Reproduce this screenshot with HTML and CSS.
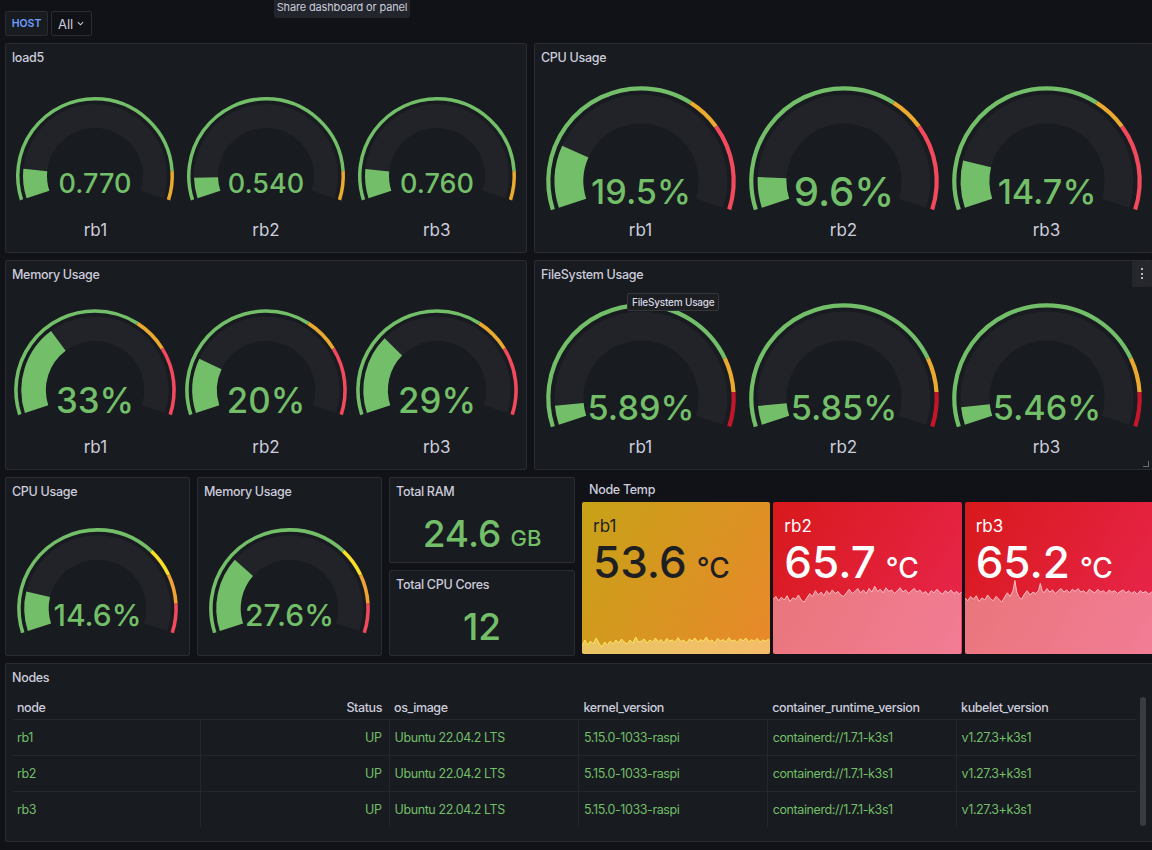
FILE: index.html
```html
<!DOCTYPE html>
<html lang="en">
<head>
<meta charset="utf-8">
<title>Dashboard</title>
<link rel="stylesheet" href="styles.css">
</head>
<body>
<div class="tip-top">Share dashboard or panel</div>
<header class="topbar">
  <div class="var-label">HOST</div>
  <div class="var-select">All <svg class="chev" viewBox="0 0 8 5"><path d="M1 1l3 3 3-3"/></svg></div>
</header>
<main class="dash">
  <div class="row row-a">
    <section class="panel w-left">
      <div class="panel-title">load5</div>
      <div class="gauges pad-sm">
        <div class="gauge">
          <svg class="g-sm" viewBox="-85 -85 170 115">
            <path class="track" d="M -57.064 18.541 A 60 60 0 1 1 57.064 18.541"/>
            <path class="vfill" pathLength="100" stroke-dasharray="11 200" d="M -57.064 18.541 A 60 60 0 1 1 57.064 18.541"/>
            <path class="th th-g" pathLength="100" stroke-dasharray="90 200" d="M -73.469 23.872 A 77.25 77.25 0 1 1 73.469 23.872"/>
            <path class="th th-o" pathLength="100" stroke-dasharray="0 90 10 200" d="M -73.469 23.872 A 77.25 77.25 0 1 1 73.469 23.872"/>
            <text class="gval f27" y="17">0.770</text>
          </svg>
          <div class="glabel lm-sm">rb1</div>
        </div>
        <div class="gauge">
          <svg class="g-sm" viewBox="-85 -85 170 115">
            <path class="track" d="M -57.064 18.541 A 60 60 0 1 1 57.064 18.541"/>
            <path class="vfill" pathLength="100" stroke-dasharray="7.7 200" d="M -57.064 18.541 A 60 60 0 1 1 57.064 18.541"/>
            <path class="th th-g" pathLength="100" stroke-dasharray="90 200" d="M -73.469 23.872 A 77.25 77.25 0 1 1 73.469 23.872"/>
            <path class="th th-o" pathLength="100" stroke-dasharray="0 90 10 200" d="M -73.469 23.872 A 77.25 77.25 0 1 1 73.469 23.872"/>
            <text class="gval f27" y="17">0.540</text>
          </svg>
          <div class="glabel lm-sm">rb2</div>
        </div>
        <div class="gauge">
          <svg class="g-sm" viewBox="-85 -85 170 115">
            <path class="track" d="M -57.064 18.541 A 60 60 0 1 1 57.064 18.541"/>
            <path class="vfill" pathLength="100" stroke-dasharray="10.9 200" d="M -57.064 18.541 A 60 60 0 1 1 57.064 18.541"/>
            <path class="th th-g" pathLength="100" stroke-dasharray="90 200" d="M -73.469 23.872 A 77.25 77.25 0 1 1 73.469 23.872"/>
            <path class="th th-o" pathLength="100" stroke-dasharray="0 90 10 200" d="M -73.469 23.872 A 77.25 77.25 0 1 1 73.469 23.872"/>
            <text class="gval f27" y="17">0.760</text>
          </svg>
          <div class="glabel lm-sm">rb3</div>
        </div>
      </div>
    </section>
    <section class="panel w-right">
      <div class="panel-title">CPU Usage</div>
      <div class="gauges pad-lg">
        <div class="gauge">
          <svg class="g-lg" viewBox="-85 -85 170 115">
            <path class="track" d="M -57.064 18.541 A 60 60 0 1 1 57.064 18.541"/>
            <path class="vfill" pathLength="100" stroke-dasharray="19.5 200" d="M -57.064 18.541 A 60 60 0 1 1 57.064 18.541"/>
            <path class="th th-g" pathLength="100" stroke-dasharray="65 200" d="M -73.469 23.872 A 77.25 77.25 0 1 1 73.469 23.872"/>
            <path class="th th-o" pathLength="100" stroke-dasharray="0 65 10 200" d="M -73.469 23.872 A 77.25 77.25 0 1 1 73.469 23.872"/>
            <path class="th th-r" pathLength="100" stroke-dasharray="0 75 25 200" d="M -73.469 23.872 A 77.25 77.25 0 1 1 73.469 23.872"/>
            <text class="gval f28" y="19">19.5%</text>
          </svg>
          <div class="glabel lm-lg">rb1</div>
        </div>
        <div class="gauge">
          <svg class="g-lg" viewBox="-85 -85 170 115">
            <path class="track" d="M -57.064 18.541 A 60 60 0 1 1 57.064 18.541"/>
            <path class="vfill" pathLength="100" stroke-dasharray="9.6 200" d="M -57.064 18.541 A 60 60 0 1 1 57.064 18.541"/>
            <path class="th th-g" pathLength="100" stroke-dasharray="65 200" d="M -73.469 23.872 A 77.25 77.25 0 1 1 73.469 23.872"/>
            <path class="th th-o" pathLength="100" stroke-dasharray="0 65 10 200" d="M -73.469 23.872 A 77.25 77.25 0 1 1 73.469 23.872"/>
            <path class="th th-r" pathLength="100" stroke-dasharray="0 75 25 200" d="M -73.469 23.872 A 77.25 77.25 0 1 1 73.469 23.872"/>
            <text class="gval f33" y="21">9.6%</text>
          </svg>
          <div class="glabel lm-lg">rb2</div>
        </div>
        <div class="gauge">
          <svg class="g-lg" viewBox="-85 -85 170 115">
            <path class="track" d="M -57.064 18.541 A 60 60 0 1 1 57.064 18.541"/>
            <path class="vfill" pathLength="100" stroke-dasharray="14.7 200" d="M -57.064 18.541 A 60 60 0 1 1 57.064 18.541"/>
            <path class="th th-g" pathLength="100" stroke-dasharray="65 200" d="M -73.469 23.872 A 77.25 77.25 0 1 1 73.469 23.872"/>
            <path class="th th-o" pathLength="100" stroke-dasharray="0 65 10 200" d="M -73.469 23.872 A 77.25 77.25 0 1 1 73.469 23.872"/>
            <path class="th th-r" pathLength="100" stroke-dasharray="0 75 25 200" d="M -73.469 23.872 A 77.25 77.25 0 1 1 73.469 23.872"/>
            <text class="gval f28" y="19">14.7%</text>
          </svg>
          <div class="glabel lm-lg">rb3</div>
        </div>
      </div>
    </section>
  </div>

  <div class="row row-a">
    <section class="panel w-left">
      <div class="panel-title">Memory Usage</div>
      <div class="gauges pad-mem">
        <div class="gauge">
          <svg class="g-mem" viewBox="-85 -85 170 115">
            <path class="track" d="M -57.064 18.541 A 60 60 0 1 1 57.064 18.541"/>
            <path class="vfill" pathLength="100" stroke-dasharray="33 200" d="M -57.064 18.541 A 60 60 0 1 1 57.064 18.541"/>
            <path class="th th-g" pathLength="100" stroke-dasharray="65 200" d="M -73.469 23.872 A 77.25 77.25 0 1 1 73.469 23.872"/>
            <path class="th th-o" pathLength="100" stroke-dasharray="0 65 12 200" d="M -73.469 23.872 A 77.25 77.25 0 1 1 73.469 23.872"/>
            <path class="th th-r" pathLength="100" stroke-dasharray="0 77 23 200" d="M -73.469 23.872 A 77.25 77.25 0 1 1 73.469 23.872"/>
            <text class="gval f34" y="22">33%</text>
          </svg>
          <div class="glabel lm-mem">rb1</div>
        </div>
        <div class="gauge">
          <svg class="g-mem" viewBox="-85 -85 170 115">
            <path class="track" d="M -57.064 18.541 A 60 60 0 1 1 57.064 18.541"/>
            <path class="vfill" pathLength="100" stroke-dasharray="20 200" d="M -57.064 18.541 A 60 60 0 1 1 57.064 18.541"/>
            <path class="th th-g" pathLength="100" stroke-dasharray="65 200" d="M -73.469 23.872 A 77.25 77.25 0 1 1 73.469 23.872"/>
            <path class="th th-o" pathLength="100" stroke-dasharray="0 65 12 200" d="M -73.469 23.872 A 77.25 77.25 0 1 1 73.469 23.872"/>
            <path class="th th-r" pathLength="100" stroke-dasharray="0 77 23 200" d="M -73.469 23.872 A 77.25 77.25 0 1 1 73.469 23.872"/>
            <text class="gval f34" y="22">20%</text>
          </svg>
          <div class="glabel lm-mem">rb2</div>
        </div>
        <div class="gauge">
          <svg class="g-mem" viewBox="-85 -85 170 115">
            <path class="track" d="M -57.064 18.541 A 60 60 0 1 1 57.064 18.541"/>
            <path class="vfill" pathLength="100" stroke-dasharray="29 200" d="M -57.064 18.541 A 60 60 0 1 1 57.064 18.541"/>
            <path class="th th-g" pathLength="100" stroke-dasharray="65 200" d="M -73.469 23.872 A 77.25 77.25 0 1 1 73.469 23.872"/>
            <path class="th th-o" pathLength="100" stroke-dasharray="0 65 12 200" d="M -73.469 23.872 A 77.25 77.25 0 1 1 73.469 23.872"/>
            <path class="th th-r" pathLength="100" stroke-dasharray="0 77 23 200" d="M -73.469 23.872 A 77.25 77.25 0 1 1 73.469 23.872"/>
            <text class="gval f34" y="22">29%</text>
          </svg>
          <div class="glabel lm-mem">rb3</div>
        </div>
      </div>
    </section>
    <section class="panel w-right">
      <div class="panel-title">FileSystem Usage</div>
      <div class="gauges pad-lg">
        <div class="gauge">
          <svg class="g-lg" viewBox="-85 -85 170 115">
            <path class="track" d="M -57.064 18.541 A 60 60 0 1 1 57.064 18.541"/>
            <path class="vfill" pathLength="100" stroke-dasharray="6 200" d="M -57.064 18.541 A 60 60 0 1 1 57.064 18.541"/>
            <path class="th th-g" pathLength="100" stroke-dasharray="80 200" d="M -73.469 23.872 A 77.25 77.25 0 1 1 73.469 23.872"/>
            <path class="th th-o" pathLength="100" stroke-dasharray="0 80 10 200" d="M -73.469 23.872 A 77.25 77.25 0 1 1 73.469 23.872"/>
            <path class="th th-dr" pathLength="100" stroke-dasharray="0 90 10 200" d="M -73.469 23.872 A 77.25 77.25 0 1 1 73.469 23.872"/>
            <text class="gval f28" y="18.5">5.89%</text>
          </svg>
          <div class="glabel lm-lg">rb1</div>
        </div>
        <div class="gauge">
          <svg class="g-lg" viewBox="-85 -85 170 115">
            <path class="track" d="M -57.064 18.541 A 60 60 0 1 1 57.064 18.541"/>
            <path class="vfill" pathLength="100" stroke-dasharray="5.9 200" d="M -57.064 18.541 A 60 60 0 1 1 57.064 18.541"/>
            <path class="th th-g" pathLength="100" stroke-dasharray="80 200" d="M -73.469 23.872 A 77.25 77.25 0 1 1 73.469 23.872"/>
            <path class="th th-o" pathLength="100" stroke-dasharray="0 80 10 200" d="M -73.469 23.872 A 77.25 77.25 0 1 1 73.469 23.872"/>
            <path class="th th-dr" pathLength="100" stroke-dasharray="0 90 10 200" d="M -73.469 23.872 A 77.25 77.25 0 1 1 73.469 23.872"/>
            <text class="gval f28" y="18.5">5.85%</text>
          </svg>
          <div class="glabel lm-lg">rb2</div>
        </div>
        <div class="gauge">
          <svg class="g-lg" viewBox="-85 -85 170 115">
            <path class="track" d="M -57.064 18.541 A 60 60 0 1 1 57.064 18.541"/>
            <path class="vfill" pathLength="100" stroke-dasharray="5.5 200" d="M -57.064 18.541 A 60 60 0 1 1 57.064 18.541"/>
            <path class="th th-g" pathLength="100" stroke-dasharray="80 200" d="M -73.469 23.872 A 77.25 77.25 0 1 1 73.469 23.872"/>
            <path class="th th-o" pathLength="100" stroke-dasharray="0 80 10 200" d="M -73.469 23.872 A 77.25 77.25 0 1 1 73.469 23.872"/>
            <path class="th th-dr" pathLength="100" stroke-dasharray="0 90 10 200" d="M -73.469 23.872 A 77.25 77.25 0 1 1 73.469 23.872"/>
            <text class="gval f28" y="18.5">5.46%</text>
          </svg>
          <div class="glabel lm-lg">rb3</div>
        </div>
      </div>
      <div class="panel-menu"><svg viewBox="0 0 4 14"><rect x="1" y="1" width="2" height="2"/><rect x="1" y="6" width="2" height="2"/><rect x="1" y="10" width="2" height="2"/></svg></div>
      <div class="panel-tip">FileSystem Usage</div>
      <div class="resize"></div>
    </section>
  </div>

  <div class="row row-b">
    <section class="panel w-g1">
      <div class="panel-title">CPU Usage</div>
      <div class="gauges pad-md">
        <div class="gauge">
          <svg class="g-md" viewBox="-85 -85 170 115">
            <path class="track" d="M -57.064 18.541 A 60 60 0 1 1 57.064 18.541"/>
            <path class="vfill" pathLength="100" stroke-dasharray="14.6 200" d="M -57.064 18.541 A 60 60 0 1 1 57.064 18.541"/>
            <path class="th th-g" pathLength="100" stroke-dasharray="70 200" d="M -73.469 23.872 A 77.25 77.25 0 1 1 73.469 23.872"/>
            <path class="th th-y" pathLength="100" stroke-dasharray="0 70 10 200" d="M -73.469 23.872 A 77.25 77.25 0 1 1 73.469 23.872"/>
            <path class="th th-o2" pathLength="100" stroke-dasharray="0 80 10 200" d="M -73.469 23.872 A 77.25 77.25 0 1 1 73.469 23.872"/>
            <path class="th th-r" pathLength="100" stroke-dasharray="0 90 10 200" d="M -73.469 23.872 A 77.25 77.25 0 1 1 73.469 23.872"/>
            <text class="gval f29" y="17.7">14.6%</text>
          </svg>
        </div>
      </div>
    </section>
    <section class="panel w-g2">
      <div class="panel-title">Memory Usage</div>
      <div class="gauges pad-md">
        <div class="gauge">
          <svg class="g-md" viewBox="-85 -85 170 115">
            <path class="track" d="M -57.064 18.541 A 60 60 0 1 1 57.064 18.541"/>
            <path class="vfill" pathLength="100" stroke-dasharray="27.6 200" d="M -57.064 18.541 A 60 60 0 1 1 57.064 18.541"/>
            <path class="th th-g" pathLength="100" stroke-dasharray="70 200" d="M -73.469 23.872 A 77.25 77.25 0 1 1 73.469 23.872"/>
            <path class="th th-y" pathLength="100" stroke-dasharray="0 70 10 200" d="M -73.469 23.872 A 77.25 77.25 0 1 1 73.469 23.872"/>
            <path class="th th-o2" pathLength="100" stroke-dasharray="0 80 10 200" d="M -73.469 23.872 A 77.25 77.25 0 1 1 73.469 23.872"/>
            <path class="th th-r" pathLength="100" stroke-dasharray="0 90 10 200" d="M -73.469 23.872 A 77.25 77.25 0 1 1 73.469 23.872"/>
            <text class="gval f29" y="17.7">27.6%</text>
          </svg>
        </div>
      </div>
    </section>
    <div class="stat-col">
      <section class="panel stat">
        <div class="panel-title">Total RAM</div>
        <div class="stat-body"><span class="stat-num">24.6</span><span class="stat-unit">GB</span></div>
      </section>
      <section class="panel stat">
        <div class="panel-title">Total CPU Cores</div>
        <div class="stat-body"><span class="stat-num">12</span></div>
      </section>
    </div>
    <section class="temp-panel">
      <div class="panel-title temp-title">Node Temp</div>
      <div class="tiles">
        <div class="tile tile-warn">
          <div class="tile-name">rb1</div>
          <div class="tile-val"><span class="tile-num">53.6</span><span class="tile-unit">°C</span></div>
          <svg class="spark spark-low" viewBox="0 0 100 100" preserveAspectRatio="none">
            <polygon class="spark-fill" points="0,60 1.5,30 3,55 4.5,35 6,50 7.5,20 9,45 10.5,65 12,40 13.5,55 15,35 16.5,50 18,30 19.5,45 21,25 22.5,40 24,50 25.5,30 27,45 28.5,15 30,40 31.5,35 33,25 34.5,45 36,30 37.5,40 39,20 40.5,38 42,28 43.5,45 45,22 46.5,35 48,30 49.5,42 51,18 52.5,38 54,30 55.5,45 57,25 58.5,35 60,20 61.5,40 63,28 64.5,36 66,15 67.5,38 69,30 70.5,44 72,22 73.5,35 75,28 76.5,40 78,18 79.5,36 81,30 82.5,42 84,24 85.5,34 87,20 88.5,40 90,28 91.5,36 93,22 94.5,40 96,30 97.5,36 99,25 100,35 100,100 0,100"/>
            <polyline class="spark-line" points="0,60 1.5,30 3,55 4.5,35 6,50 7.5,20 9,45 10.5,65 12,40 13.5,55 15,35 16.5,50 18,30 19.5,45 21,25 22.5,40 24,50 25.5,30 27,45 28.5,15 30,40 31.5,35 33,25 34.5,45 36,30 37.5,40 39,20 40.5,38 42,28 43.5,45 45,22 46.5,35 48,30 49.5,42 51,18 52.5,38 54,30 55.5,45 57,25 58.5,35 60,20 61.5,40 63,28 64.5,36 66,15 67.5,38 69,30 70.5,44 72,22 73.5,35 75,28 76.5,40 78,18 79.5,36 81,30 82.5,42 84,24 85.5,34 87,20 88.5,40 90,28 91.5,36 93,22 94.5,40 96,30 97.5,36 99,25 100,35"/>
          </svg>
        </div>
        <div class="tile tile-crit">
          <div class="tile-name">rb2</div>
          <div class="tile-val"><span class="tile-num">65.7</span><span class="tile-unit">°C</span></div>
          <svg class="spark spark-high" viewBox="0 0 100 100" preserveAspectRatio="none">
            <polygon class="spark-fill" points="0,24 1.5,20 3,26 4.5,21 6,25 7.5,19 9,27 10.5,22 12,24 13.5,18 15,25 16.5,28 18,22 19.5,16 21,20 22.5,12 24,18 25.5,14 27,19 28.5,12 30,17 31.5,11 33,16 34.5,13 36,18 37.5,20 39,15 40.5,10 42,16 43.5,13 45,9 46.5,15 48,11 49.5,16 51,9 52.5,14 54,6 55.5,13 57,10 58.5,15 60,8 61.5,13 63,11 64.5,16 66,12 67.5,8 69,14 70.5,11 72,16 73.5,12 75,9 76.5,14 78,11 79.5,16 81,13 82.5,18 84,12 85.5,15 87,10 88.5,14 90,17 91.5,12 93,15 94.5,11 96,16 97.5,13 99,17 100,14 100,100 0,100"/>
            <polyline class="spark-line" points="0,24 1.5,20 3,26 4.5,21 6,25 7.5,19 9,27 10.5,22 12,24 13.5,18 15,25 16.5,28 18,22 19.5,16 21,20 22.5,12 24,18 25.5,14 27,19 28.5,12 30,17 31.5,11 33,16 34.5,13 36,18 37.5,20 39,15 40.5,10 42,16 43.5,13 45,9 46.5,15 48,11 49.5,16 51,9 52.5,14 54,6 55.5,13 57,10 58.5,15 60,8 61.5,13 63,11 64.5,16 66,12 67.5,8 69,14 70.5,11 72,16 73.5,12 75,9 76.5,14 78,11 79.5,16 81,13 82.5,18 84,12 85.5,15 87,10 88.5,14 90,17 91.5,12 93,15 94.5,11 96,16 97.5,13 99,17 100,14"/>
          </svg>
        </div>
        <div class="tile tile-crit">
          <div class="tile-name">rb3</div>
          <div class="tile-val"><span class="tile-num">65.2</span><span class="tile-unit">°C</span></div>
          <svg class="spark spark-high" viewBox="0 0 100 100" preserveAspectRatio="none">
            <polygon class="spark-fill" points="0,22 1.5,26 3,20 4.5,24 6,19 7.5,27 9,22 10.5,25 12,18 13.5,23 15,26 16.5,20 18,24 19.5,28 21,21 22.5,15 24,20 25.5,12 26.5,-2 27.5,14 28.5,20 30,24 31.5,17 33,12 34.5,18 36,14 37.5,16 39,12 40,2 41,12 42,15 43.5,9 45,14 46.5,11 48,16 49.5,12 51,9 52.5,14 54,11 55.5,15 57,10 58.5,13 60,9 61.5,14 63,12 64.5,16 66,10 67.5,13 69,15 70.5,10 72,14 73.5,12 75,16 76.5,11 78,14 79.5,12 81,16 82.5,13 84,11 85.5,15 87,12 88.5,16 90,13 91.5,17 93,12 94.5,15 96,13 97.5,17 99,14 100,16 100,100 0,100"/>
            <polyline class="spark-line" points="0,22 1.5,26 3,20 4.5,24 6,19 7.5,27 9,22 10.5,25 12,18 13.5,23 15,26 16.5,20 18,24 19.5,28 21,21 22.5,15 24,20 25.5,12 26.5,-2 27.5,14 28.5,20 30,24 31.5,17 33,12 34.5,18 36,14 37.5,16 39,12 40,2 41,12 42,15 43.5,9 45,14 46.5,11 48,16 49.5,12 51,9 52.5,14 54,11 55.5,15 57,10 58.5,13 60,9 61.5,14 63,12 64.5,16 66,10 67.5,13 69,15 70.5,10 72,14 73.5,12 75,16 76.5,11 78,14 79.5,12 81,16 82.5,13 84,11 85.5,15 87,12 88.5,16 90,13 91.5,17 93,12 94.5,15 96,13 97.5,17 99,14 100,16"/>
          </svg>
        </div>
      </div>
    </section>
  </div>

  <div class="row row-b">
    <section class="panel w-full">
      <div class="panel-title">Nodes</div>
      <div class="table-wrap">
        <table class="nodes">
          <colgroup>
            <col class="c1"><col class="c2"><col class="c3"><col class="c4"><col class="c5"><col class="c6">
          </colgroup>
          <thead>
            <tr><th>node</th><th class="right">Status</th><th>os_image</th><th>kernel_version</th><th>container_runtime_version</th><th>kubelet_version</th></tr>
          </thead>
          <tbody>
            <tr><td>rb1</td><td class="right">UP</td><td>Ubuntu 22.04.2 LTS</td><td>5.15.0-1033-raspi</td><td>containerd://1.7.1-k3s1</td><td>v1.27.3+k3s1</td></tr>
            <tr><td>rb2</td><td class="right">UP</td><td>Ubuntu 22.04.2 LTS</td><td>5.15.0-1033-raspi</td><td>containerd://1.7.1-k3s1</td><td>v1.27.3+k3s1</td></tr>
            <tr><td>rb3</td><td class="right">UP</td><td>Ubuntu 22.04.2 LTS</td><td>5.15.0-1033-raspi</td><td>containerd://1.7.1-k3s1</td><td>v1.27.3+k3s1</td></tr>
          </tbody>
        </table>
        <div class="scrollbar"></div>
      </div>
    </section>
  </div>
</main>
</body>
</html>
```

FILE: styles.css
```css
* { box-sizing: border-box; }
html, body { margin: 0; padding: 0; }
body {
  background: #111217;
  font-family: Inter, "Noto Sans", sans-serif;
  color: #ccccdc;
  width: 1152px;
  height: 850px;
  overflow: hidden;
  position: relative;
}

.tip-top {
  position: absolute;
  left: 274px;
  top: -4px;
  width: 136px;
  height: 22px;
  padding-top: 4px;
  background: #22252b;
  border-radius: 3px;
  font-size: 11px;
  letter-spacing: -0.15px;
  line-height: 14px;
  text-align: center;
  white-space: nowrap;
  color: #ccccdc;
  z-index: 5;
}

.topbar {
  height: 43px;
  display: flex;
  align-items: flex-start;
  gap: 3px;
  padding: 11px 0 0 5px;
}
.var-label {
  height: 25px;
  width: 43px;
  display: flex;
  align-items: center;
  justify-content: center;
  border: 1px solid #2a2c31;
  background: #181b1f;
  color: #6e9fff;
  font-size: 10.5px;
  font-weight: 600;
  border-radius: 2px;
}
.var-select {
  height: 25px;
  width: 41px;
  padding: 0 0 0 6px;
  display: flex;
  align-items: center;
  gap: 4px;
  border: 1px solid #2a2c31;
  background: #111217;
  font-size: 13px;
  color: #ccccdc;
  border-radius: 2px;
}
.chev { width: 7px; height: 5px; }
.chev path { fill: none; stroke: #ccccdc; stroke-width: 1.2; }

.dash {
  display: flex;
  flex-direction: column;
  gap: 7px;
  padding-left: 5px;
  width: 1153px;
}
.row { display: flex; gap: 7px; }
.row-a { height: 210px; }
.row-b { height: 179px; }

.panel {
  background: #181b1f;
  border: 1px solid #2a2c31;
  border-radius: 2px;
  position: relative;
  overflow: hidden;
}
.w-left { width: 522px; }
.w-right { flex: 1; }
.w-g1 { width: 185px; }
.w-g2 { width: 185px; }
.w-full { flex: 1; }

.panel-title {
  height: 27px;
  line-height: 27px;
  padding-left: 6px;
  font-size: 12.5px;
  letter-spacing: -0.3px;
  font-weight: 500;
  color: #ccccdc;
  white-space: nowrap;
}

/* gauges */
.gauges { display: flex; padding: 0 4px; }
.pad-sm { padding-top: 20px; }
.pad-mem { padding-top: 15px; }
.pad-lg { padding-top: 8px; }
.pad-md { padding-top: 17px; }
.gauge {
  flex: 1;
  display: flex;
  flex-direction: column;
  align-items: center;
  min-width: 0;
}
.gauge svg { flex-shrink: 0; overflow: visible; }
.g-sm { width: 170px; height: 115px; }
.g-mem { width: 174px; height: 118px; }
.g-lg { width: 204px; height: 138px; }
.g-md { width: 173px; height: 117px; }
.track { fill: none; stroke: #222328; stroke-width: 24; }
.vfill { fill: none; stroke: #73bf69; stroke-width: 24; }
.th { fill: none; stroke-width: 3.5; }
.th-g { stroke: #73bf69; }
.th-o { stroke: #eaa92f; }
.th-o2 { stroke: #f2a135; }
.th-y { stroke: #fade2a; }
.th-r { stroke: #f2495c; }
.th-dr { stroke: #c4162a; }
.gval {
  fill: #73bf69;
  font-family: Inter, "Noto Sans", sans-serif;
  font-weight: 500;
  text-anchor: middle;
}
.f27 { font-size: 27px; }
.f28 { font-size: 28.5px; }
.f29 { font-size: 29.5px; }
.f33 { font-size: 33.5px; }
.f34 { font-size: 34px; }
.glabel {
  font-size: 17px;
  line-height: 22px;
  color: #ccccdc;
  text-align: center;
}
.lm-sm { margin-top: 13px; }
.lm-mem { margin-top: 15px; }
.lm-lg { margin-top: 2px; }

.panel-menu {
  position: absolute;
  top: 0;
  right: 0;
  width: 20px;
  height: 26px;
  background: #25272d;
  display: flex;
  align-items: center;
  justify-content: center;
  border-radius: 2px;
}
.panel-menu svg { width: 4px; height: 14px; }
.panel-menu rect { fill: #b4b6bc; }
.panel-tip {
  position: absolute;
  left: 92px;
  top: 32px;
  height: 18px;
  padding: 0 4px;
  line-height: 16px;
  font-size: 10px;
  letter-spacing: -0.2px;
  font-weight: 500;
  background: #1c1e22;
  border: 1px solid #34363b;
  border-radius: 2px;
  color: #d8d8e2;
  white-space: nowrap;
}
.resize {
  position: absolute;
  right: 3px;
  bottom: 2px;
  width: 6px;
  height: 6px;
  border-right: 1px solid #6a6c72;
  border-bottom: 1px solid #6a6c72;
}

/* stats */
.stat-col {
  width: 186px;
  display: flex;
  flex-direction: column;
  gap: 7px;
}
.stat { flex: 1; }
.stat-body {
  height: 57px;
  display: flex;
  align-items: center;
  justify-content: center;
  gap: 9px;
  color: #73bf69;
  font-weight: 500;
}
.stat-body span { line-height: 1; }
.stat-num { font-size: 37px; }
.stat-unit { font-size: 22px; margin-top: 9px; }

/* node temp */
.temp-panel {
  flex: 1;
  display: flex;
  flex-direction: column;
}
.temp-title { padding-left: 7px; height: 25px; line-height: 26px; }
.tiles {
  display: flex;
  gap: 3px;
  height: 152px;
}
.tile {
  flex: 1;
  position: relative;
  overflow: hidden;
  border-radius: 2px;
  padding: 13px 11px 0;
}
.tile-warn { background: linear-gradient(120deg, #c7a217, #e9882b); color: #1e1f22; }
.tile-crit { background: linear-gradient(120deg, #d8191b, #e9264f); color: #ffffff; }
.tile-name {
  position: relative;
  z-index: 1;
  font-size: 17px;
  line-height: 22px;
}
.tile-val {
  position: relative;
  z-index: 1;
  display: flex;
  align-items: baseline;
  gap: 10px;
  margin-top: 3px;
  font-weight: 500;
}
.tile-num { font-size: 44px; line-height: 44px; }
.tile-unit { font-size: 28px; line-height: 28px; }
.spark {
  position: absolute;
  left: 0;
  bottom: 0;
  width: 100%;
  overflow: visible;
}
.spark-low { height: 20px; }
.spark-high { height: 72px; }
.spark-line { fill: none; stroke-width: 1; vector-effect: non-scaling-stroke; }
.tile-warn .spark-fill { fill: rgba(255, 240, 170, 0.5); }
.tile-warn .spark-line { stroke: #fbe660; }
.tile-crit .spark-fill { fill: rgba(255, 255, 255, 0.4); }
.tile-crit .spark-line { stroke: rgba(255, 200, 205, 0.9); }

/* table */
.table-wrap {
  position: relative;
  padding: 5px 0 0 6px;
}
.nodes {
  border-collapse: collapse;
  table-layout: fixed;
  width: 1125px;
  font-size: 12.5px;
  letter-spacing: -0.4px;
}
.c1 { width: 188px; }
.c2 { width: 189px; }
.c3 { width: 189.5px; }
.c4 { width: 188.7px; }
.c5 { width: 188.9px; }
.c6 { width: 180.9px; }
.nodes th {
  height: 23px;
  text-align: left;
  font-weight: 500;
  color: #ccccdc;
  padding: 0 5px;
  border-bottom: 1px solid #25272c;
  white-space: nowrap;
}
.nodes td {
  height: 36px;
  padding: 0 5px;
  color: #73bf69;
  border-left: 1px solid #25272c;
  border-bottom: 1px solid #25272c;
  white-space: nowrap;
}
.nodes td:first-child { border-left: none; }
.nodes tbody tr:last-child td { border-bottom: none; }
.nodes .right { text-align: right; padding-right: 7px; }
.scrollbar {
  position: absolute;
  left: 1134px;
  top: 6px;
  width: 6px;
  height: 129px;
  border-radius: 3px;
  background: #3a3c41;
}
```
